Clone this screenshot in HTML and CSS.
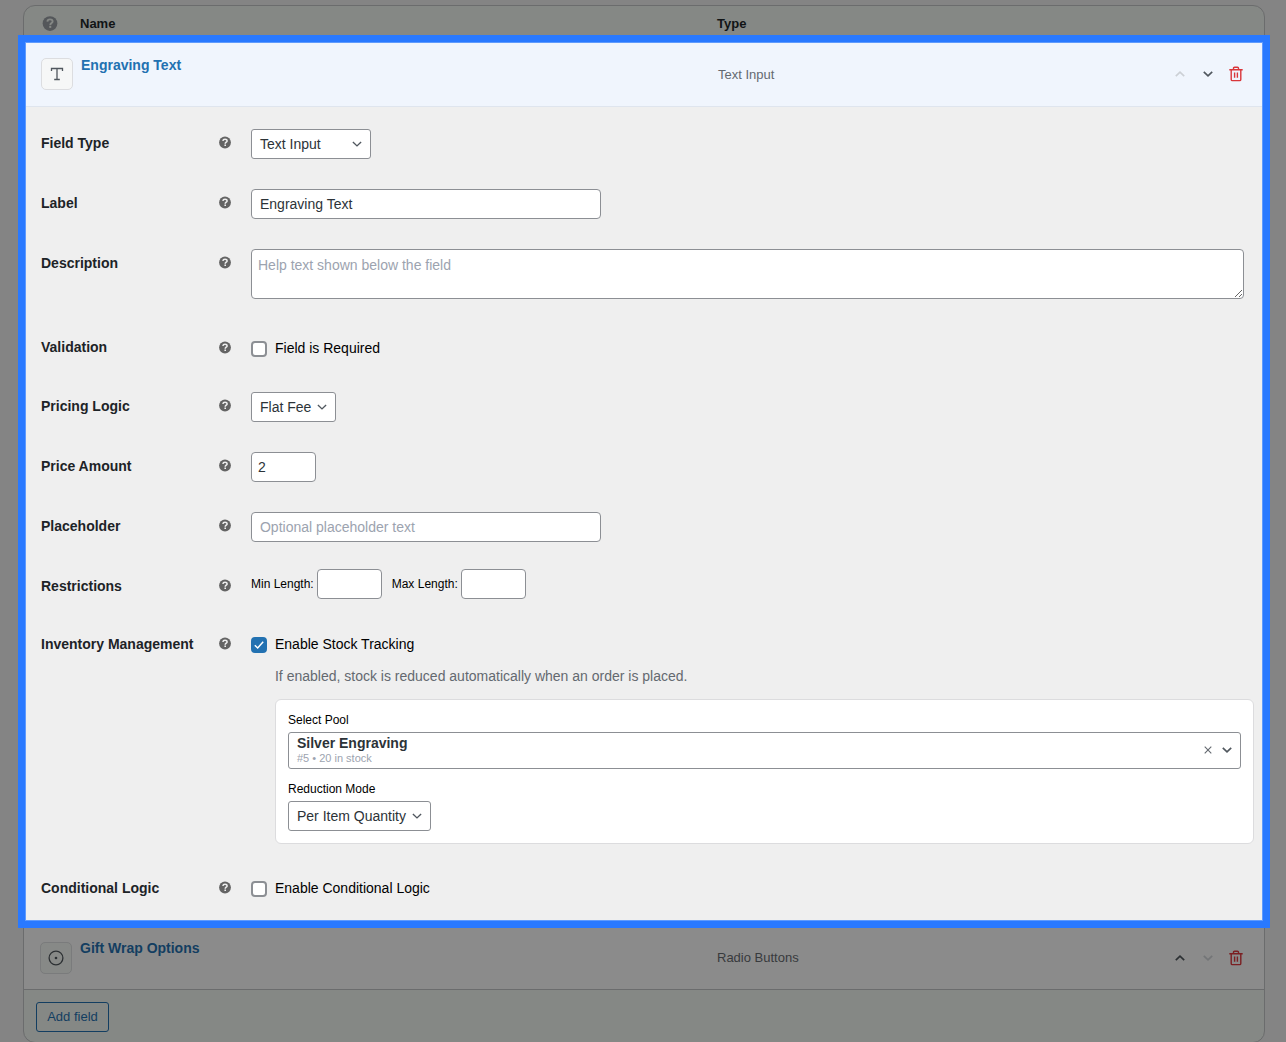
FILE: index.html
```html
<!DOCTYPE html>
<html lang="en">
<head>
<meta charset="utf-8">
<title>Product fields</title>
<link rel="stylesheet" href="styles.css">
</head>
<body>
<svg class="sprite" width="0" height="0">
  <symbol id="help" viewBox="0 0 12 12"><circle cx="6" cy="6" r="5.9" fill="currentColor"/><path d="M3.900 4.500C4 3.200 4.900 2.700 6 2.700s2.100.6 2.100 1.700C8.100 5.700 6.200 5.700 6.200 7.300" fill="none" stroke="var(--hole)" stroke-width="1.500"/><rect x="5.400" y="8" width="1.600" height="1.500" fill="var(--hole)"/></symbol>
  <symbol id="down" viewBox="0 0 10 6"><path d="M.9 1 5 4.900 9.100 1" fill="none" stroke="currentColor" stroke-width="1.400"/></symbol>
  <symbol id="down-bold" viewBox="0 0 10 6"><path d="M.8.9 5 4.800 9.200.9" fill="none" stroke="currentColor" stroke-width="1.700"/></symbol>
  <symbol id="up" viewBox="0 0 10 6"><path d="M.8 5.100 5 1.200 9.200 5.100" fill="none" stroke="currentColor" stroke-width="1.700"/></symbol>
  <symbol id="trash" viewBox="0 0 14 16"><path d="M.3 3.700h13.400M4.500 3.400V2.200q0-1 1-1h3q1 0 1 1v1.200M2.200 3.700V13.400q0 1.200 1.200 1.200h7.200q1.200 0 1.200-1.200V3.700M5.600 6.500v5.200M8.400 6.500v5.200" fill="none" stroke="currentColor" stroke-width="1.400"/></symbol>
</svg>
<main class="panel">
  <header class="head">
    <svg class="head-help"><use href="#help"/></svg>
    <span class="name">Name</span><span>Type</span>
  </header>

  <section class="active">
    <div class="item">
      <span class="tile"><svg width="14" height="14" viewBox="0 0 14 14"><path d="M1.500 4V1.500h11V4M7 1.500v11M4.200 12.500h5.600" fill="none" stroke="currentColor" stroke-width="1.300"/></svg></span>
      <a class="title">Engraving Text</a>
      <span class="type">Text Input</span>
      <span class="actions"><svg class="chev off"><use href="#up"/></svg><svg class="chev"><use href="#down-bold"/></svg><svg class="trash"><use href="#trash"/></svg></span>
    </div>
    <div class="form">
      <div class="row"><b>Field Type</b><svg class="help"><use href="#help"/></svg>
        <div class="select w120">Text Input<svg class="caret"><use href="#down"/></svg></div></div>
      <div class="row"><b>Label</b><svg class="help"><use href="#help"/></svg>
        <input class="input" value="Engraving Text"></div>
      <div class="row tall"><b>Description</b><svg class="help"><use href="#help"/></svg>
        <textarea class="area" placeholder="Help text shown below the field"></textarea></div>
      <div class="row check-row"><b>Validation</b><svg class="help low"><use href="#help"/></svg>
        <label class="check"><i class="box"></i>Field is Required</label></div>
      <div class="row"><b>Pricing Logic</b><svg class="help"><use href="#help"/></svg>
        <div class="select w85">Flat Fee<svg class="caret"><use href="#down"/></svg></div></div>
      <div class="row"><b>Price Amount</b><svg class="help"><use href="#help"/></svg>
        <input class="input num" value="2"></div>
      <div class="row"><b>Placeholder</b><svg class="help"><use href="#help"/></svg>
        <input class="input" placeholder="Optional placeholder text"></div>
      <div class="row limits-row"><b>Restrictions</b><svg class="help"><use href="#help"/></svg>
        <div class="limits"><label>Min Length:</label><input class="input num"><label class="max">Max Length:</label><input class="input num"></div></div>
      <div class="row stock-row"><b>Inventory Management</b><svg class="help"><use href="#help"/></svg>
        <div class="stock">
          <label class="check raised"><i class="box on"><svg width="12" height="12" viewBox="0 0 12 12"><path d="M1.800 6.300 4.700 9 10.200 2.800" fill="none" stroke="#fff" stroke-width="1.500"/></svg></i>Enable Stock Tracking</label>
          <p class="hint">If enabled, stock is reduced automatically when an order is placed.</p>
          <div class="card">
            <span class="small">Select Pool</span>
            <div class="pool"><div class="pool-text"><strong>Silver Engraving</strong><span>#5 • 20 in stock</span></div>
              <svg class="clear" width="8" height="8" viewBox="0 0 8 8"><path d="M.7.7l6.600 6.600M7.300.7.7 7.300" stroke="currentColor" stroke-width="1.100"/></svg>
              <svg class="caret"><use href="#down-bold"/></svg></div>
            <span class="small">Reduction Mode</span>
            <div class="select w143">Per Item Quantity<svg class="caret"><use href="#down"/></svg></div>
          </div>
        </div></div>
      <div class="row check-row"><b>Conditional Logic</b><svg class="help"><use href="#help"/></svg>
        <label class="check raised"><i class="box"></i>Enable Conditional Logic</label></div>
    </div>
  </section>

  <section class="item dim">
    <span class="tile"><svg width="16" height="16" viewBox="0 0 16 16"><circle cx="8" cy="8" r="6.900" fill="none" stroke="currentColor" stroke-width="1.300"/><circle cx="8" cy="8" r="1.300" fill="currentColor"/></svg></span>
    <a class="title">Gift Wrap Options</a>
    <span class="type">Radio Buttons</span>
    <span class="actions"><svg class="chev"><use href="#up"/></svg><svg class="chev off"><use href="#down-bold"/></svg><svg class="trash"><use href="#trash"/></svg></span>
  </section>
  <footer class="foot"><button class="add">Add field</button></footer>
</main>
</body>
</html>
```
FILE: styles.css
```css
* { box-sizing: border-box; }
html, body { height: 100%; overflow: hidden; }
body {
  margin: 0;
  padding: 5px 21px 0 23px;
  background: #848484;
  font: 14px/18px "Liberation Sans", Arial, sans-serif;
  color: #1d2327;
}
svg { display: block; }
.sprite { position: absolute; }
.panel {
  height: 1038px;
  border: 1px solid #6b6c6d;
  border-radius: 12px;
  background: #858885;
}
.head {
  --hole: #858885;
  display: grid;
  grid-template-columns: 56px 637px 1fr;
  height: 29px;
  padding-top: 9px;
  font-size: 13px;
  font-weight: bold;
  color: #111416;
}
.head-help { width: 16px; height: 15px; margin: 1px 0 0 18px; color: #54575a; }

.active {
  position: relative;
  height: 893px;
  margin: 0 -6px;
  border: 8px solid #2979ff;
  background: #efefef;
}
/* soft inner edge of the highlight frame */
.active::after {
  content: "";
  position: absolute;
  inset: -1px;
  border: 1px solid #5f9bfd;
  pointer-events: none;
}
.item {
  display: grid;
  grid-template-columns: 40px 637px 1fr auto;
  height: 64px;
  padding: 15px 18px 0 15px;
  background: #f0f5fd;
  border-bottom: 1px solid #dfe5ee;
}
.tile {
  display: flex;
  align-items: center;
  justify-content: center;
  width: 32px;
  height: 32px;
  border: 1px solid #dcdde0;
  border-radius: 5px;
  background: #f6f7f7;
  color: #50575e;
}
.title { margin-top: -2px; font-weight: bold; color: #2271b1; }
.type { margin-top: 8px; font-size: 13px; color: #646970; }
.actions { display: flex; align-items: center; height: 32px; gap: 14px; padding-right: 1px; color: #50575e; }
.chev { width: 10px; height: 6px; margin-right: 4px; }
.chev.off { color: #ccd0d5; }
.trash { width: 14px; height: 16px; margin-left: -2px; color: #d9363a; }

.form { --hole: #efefef; padding: 7px 8px 0 15px; }
.row {
  display: grid;
  grid-template-columns: 177.700px 32.300px 1fr;
  align-items: start;
  height: 60px;
  padding-top: 15px;
}
.row b { margin-top: 5px; }
.help { width: 12px; height: 13px; margin-top: 7px; color: #646464; }
.help.low { margin-top: 8px; }
.tall { height: 84px; }
.check-row { height: 59px; }
.limits-row { height: 58px; }
.stock-row { height: 244px; }
.select, .input, .area, .pool {
  border: 1px solid #8c8f94;
  border-radius: 4px;
  background: #fff;
  color: #2c3338;
  font: inherit;
}
.select, .pool { border-radius: 3px; }
.select {
  display: flex;
  align-items: center;
  justify-content: space-between;
  height: 30px;
  padding: 0 8px;
}
.w120 { width: 120px; }
.w85 { width: 85px; }
.w143 { width: 143px; }
.caret { width: 10px; height: 6px; color: #50575e; }
.input { width: 350px; height: 30px; padding: 0 8px; }
.num { width: 65px; padding: 0 6px; }
.area { display: block; width: 993px; height: 50px; padding: 6px; resize: vertical; }
::placeholder { color: #9ca3af; opacity: 1; }
.check { display: flex; align-items: center; gap: 8px; height: 20px; margin-top: 5px; color: #000; }
.check.raised { margin-top: 4px; }
.box {
  display: flex;
  align-items: center;
  justify-content: center;
  width: 16px;
  height: 16px;
  margin-top: 2px;
  border: 2px solid #8c8f94;
  border-radius: 4px;
  background: #fff;
}
.box.on { border-color: #2271b1; background: #2271b1; }
.limits { display: flex; align-items: center; gap: 3px; margin-top: -3px; font-size: 12px; color: #000; }
.max { margin-left: 7px; }
.hint { margin: 13px 0 14px 24px; color: #646970; }
.card {
  height: 145px;
  margin-left: 24px;
  padding: 12px;
  border: 1px solid #dcdcde;
  border-radius: 6px;
  background: #fff;
}
.small { display: block; height: 20px; line-height: 16px; font-size: 12px; color: #000; }
.pool { display: flex; align-items: center; height: 37px; margin-bottom: 12px; padding: 0 8px; }
.pool-text { flex: 1; line-height: 15px; }
.pool-text strong, .pool-text span { display: block; }
.pool-text span { font-size: 11px; color: #9ca3af; }
.pool svg { margin-bottom: 1px; }
.clear { margin-right: 10px; color: #646970; }

.dim {
  height: 62px;
  padding: 14px 17px 0 16px;
  background: #8b8b8b;
  border-color: #6b6c6d;
}
.dim .tile { background: #878987; border-color: #7a7b7c; color: #2c3033; }
.dim .title { margin-top: -3px; color: #133e61; }
.dim .type { margin-top: 7px; color: #383a3d; }
.dim .actions { padding-right: 4px; color: #2c3033; }
.dim .off { color: #737577; }
.dim .trash { color: #7b1f22; }
.foot { padding: 12px; }
.add {
  display: block;
  width: 73px;
  height: 30px;
  padding: 0 0 2px;
  border: 1px solid #133e61;
  border-radius: 3px;
  background: #858885;
  color: #133e61;
  font: 13px "Liberation Sans", Arial, sans-serif;
}
```
